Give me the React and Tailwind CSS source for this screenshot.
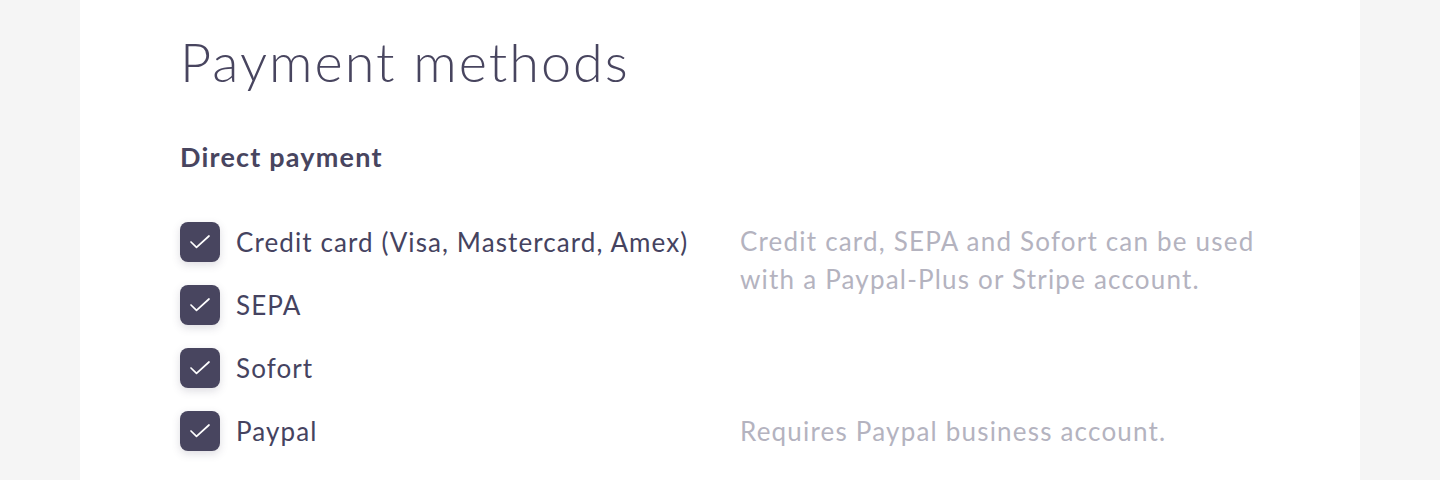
import React from "react";

function Check() {
  return (
    <div className="relative w-10 h-10 shrink-0 rounded-[8px] bg-[#48455f] shadow-[0_3px_8px_rgba(72,69,95,0.18)]">
      <svg className="block" width="40" height="40" viewBox="0 0 40 40" fill="none">
        <path d="M11 20 L16.5 25.3 L29 14" stroke="#ffffff" strokeWidth="1.7" strokeLinecap="round" strokeLinejoin="round" />
      </svg>
    </div>
  );
}

function Row({ label }) {
  return (
    <div className="flex items-center gap-[16px] h-10">
      <Check />
      <span className="text-[26px] leading-none text-[#454360] tracking-[1.1px]">{label}</span>
    </div>
  );
}

export default function App() {
  return (
    <div className="min-h-[480px] bg-[#f5f5f5] px-20 font-['Lato','Noto_Sans',sans-serif]">
      <div className="bg-white h-[480px] pl-[100px] pt-[27px]">
        <h1 className="text-[54px] font-light leading-[70px] text-[#48455f] tracking-[2px]">Payment methods</h1>
        <h2 className="mt-[45px] text-[27px] font-bold leading-[30px] text-[#48455f] tracking-[1.2px]">Direct payment</h2>
        <div className="mt-[50px] flex">
          <div className="w-[560px] flex flex-col gap-[23px]">
            <Row label="Credit card (Visa, Mastercard, Amex)" />
            <Row label="SEPA" />
            <Row label="Sofort" />
            <Row label="Paypal" />
          </div>
          <div className="flex flex-col text-[26px] leading-[38px] text-[#b4b3bf] tracking-[1.2px]">
            <p>Credit card, SEPA and Sofort can be used<br />with a Paypal-Plus or Stripe account.</p>
            <p className="mt-[114px]">Requires Paypal business account.</p>
          </div>
        </div>
      </div>
    </div>
  );
}
